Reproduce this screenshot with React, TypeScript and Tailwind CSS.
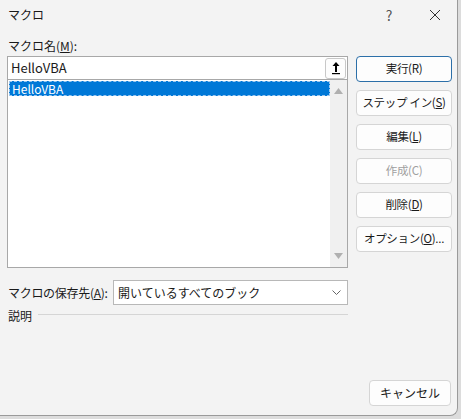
import React from 'react';

const font = { fontFamily: '"Noto Sans CJK JP", "Noto Sans", sans-serif' };

function DlgButton({
  children,
  primary,
  disabled,
}: {
  children: React.ReactNode;
  primary?: boolean;
  disabled?: boolean;
}) {
  return (
    <div
      className={`flex h-[26px] w-[96px] items-center justify-center rounded-[4px] border bg-[#fdfdfd] text-[11.5px] tracking-[-0.3px] ${
        primary ? 'border-[#2c6fa8]' : 'border-[#d5d5d5]'
      } ${disabled ? 'text-[#a0a0a0]' : 'text-[#1a1a1a]'}`}
    >
      {children}
    </div>
  );
}

export default function App() {
  return (
    <div className="h-[419px] w-[461px] bg-[#dcdcdc]" style={font}>
      <div className="flex h-[416px] w-[458px] flex-col rounded-br-lg border-r border-b border-[#9a9a9a] bg-[#f3f3f3] text-[12px] text-[#1a1a1a]">
        {/* title bar */}
        <div className="flex h-[30px] items-center pl-[8px]">
          <span className="flex-1">マクロ</span>
          <span className="w-[20px] text-center text-[14px] text-[#555]">?</span>
          <span className="ml-[26px] mr-[12px] flex w-[20px] justify-center">
            <svg width="12" height="12" viewBox="0 0 12 12">
              <path d="M1 1L11 11M11 1L1 11" stroke="#333" strokeWidth="1" />
            </svg>
          </span>
        </div>

        <div className="flex pl-[7px]">
          {/* left column */}
          <div className="flex w-[341px] flex-col">
            <div className="mt-[5px] h-[21px] pl-[1px] leading-[21px]">
              マクロ名(<span className="underline">M</span>):
            </div>
            <div className="flex h-[24px] items-center border border-[#a8a8a8] bg-white">
              <span className="flex-1 pl-[3px] text-[13px]">HelloVBA</span>
              <div className="mr-[1px] flex h-[21px] w-[21px] items-center justify-center rounded-[3px] border border-[#c8c8c8] bg-[#fdfdfd]">
                <svg width="10" height="14" viewBox="0 0 10 14">
                  <path d="M5 1L1.5 5H4V11H6V5H8.5Z" fill="#000" />
                  <rect x="1" y="12" width="8" height="1.2" fill="#000" />
                </svg>
              </div>
            </div>
            <div className="flex h-[188px] border border-t-0 border-[#a8a8a8] bg-white">
              <div className="flex-1 pl-[1px] pt-[1px]">
                <div className="h-[15px] border border-dashed border-[#9cc8f0] bg-[#0078d7] pl-[2px] text-[12px] leading-[13px] text-white">
                  HelloVBA
                </div>
              </div>
              <div className="flex w-[17px] flex-col items-center justify-between bg-[#f0f0f0] py-[8px]">
                <svg width="9" height="6" viewBox="0 0 9 6">
                  <path d="M4.5 0L9 6H0Z" fill="#b0b0b0" />
                </svg>
                <svg width="9" height="6" viewBox="0 0 9 6">
                  <path d="M0 0H9L4.5 6Z" fill="#b0b0b0" />
                </svg>
              </div>
            </div>
          </div>

          {/* right buttons */}
          <div className="ml-[8px] flex flex-col gap-[8px] pt-[26px]">
            <DlgButton primary>実行(R)</DlgButton>
            <DlgButton>
              ステップ イン(<span className="underline">S</span>)
            </DlgButton>
            <DlgButton>
              編集(<span className="underline">L</span>)
            </DlgButton>
            <DlgButton disabled>作成(C)</DlgButton>
            <DlgButton>
              削除(<span className="underline">D</span>)
            </DlgButton>
            <DlgButton>
              オプション(<span className="underline">O</span>)...
            </DlgButton>
          </div>
        </div>

        {/* save location */}
        <div className="mt-[12px] flex w-[348px] items-center pl-[8px]">
          <span className="w-[105px] tracking-[-0.3px]">
            マクロの保存先(<span className="underline">A</span>):
          </span>
          <div className="flex h-[25px] flex-1 items-center border border-[#b8b8b8] bg-white pl-[4px]">
            <span className="flex-1">開いているすべてのブック</span>
            <svg className="mr-[6px]" width="9" height="5" viewBox="0 0 9 5">
              <path d="M0.5 0.5L4.5 4.5L8.5 0.5" stroke="#666" fill="none" />
            </svg>
          </div>
        </div>

        {/* description */}
        <div className="mt-[2px] flex w-[348px] items-center pl-[8px]">
          <span>説明</span>
          <div className="ml-[6px] mt-[-4px] h-px flex-1 bg-[#d5d5d5]" />
        </div>

        <div className="flex flex-1 items-end justify-end pb-[9px] pr-[6px]">
          <div className="flex h-[26px] w-[82px] items-center justify-center rounded-[4px] border border-[#d5d5d5] bg-[#fdfdfd]">
            キャンセル
          </div>
        </div>
      </div>
    </div>
  );
}
